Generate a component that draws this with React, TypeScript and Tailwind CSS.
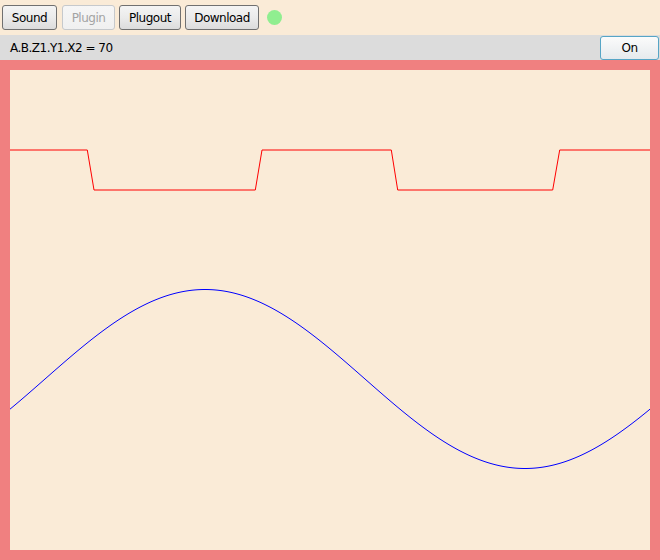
import React from "react";

const font = { fontFamily: '"DejaVu Sans", Verdana, sans-serif' };

function Btn({ label, w, disabled }: { label: string; w: string; disabled?: boolean }) {
  return (
    <button
      className={
        disabled
          ? `${w} h-[25px] rounded-[3px] border border-[#c6c9cc] bg-gradient-to-b from-[#f6f6f6] to-[#f0f0f0] text-[12px] tracking-[-0.5px] text-[#a3a3a3] flex items-center justify-center pt-[1px]`
          : `${w} h-[25px] rounded-[3px] border border-[#707070] bg-gradient-to-b from-[#f4f4f4] via-[#ebebeb] to-[#dcdcdc] text-[12px] tracking-[-0.5px] text-black flex items-center justify-center pt-[1px]`
      }
    >
      {label}
    </button>
  );
}

export default function App() {
  const pts: string[] = [];
  for (let x = 0; x <= 640; x += 2) {
    const y = 309 - 89.5 * Math.sin((2 * Math.PI * (x - 35)) / 640);
    pts.push(`${x},${y.toFixed(2)}`);
  }
  const sq =
    "M0,80 L77.3,80 L84,120 L245.3,120 L252,80 L381.3,80 L387.7,120 L542.7,120 L549.7,80 L640,80";
  return (
    <div className="w-[660px] h-[560px] bg-[#faebd7] flex flex-col" style={font}>
      <div className="h-[35px] flex items-start pt-[5px] pl-[2px]">
        <Btn label="Sound" w="w-[55px]" />
        <div className="w-[5px]" />
        <Btn label="Plugin" w="w-[53px]" disabled />
        <div className="w-[4px]" />
        <Btn label="Plugout" w="w-[62px]" />
        <div className="w-[4px]" />
        <Btn label="Download" w="w-[74px]" />
        <div className="ml-[8px] mt-[5px] w-[15px] h-[15px] rounded-full bg-[#90ee90]" />
      </div>
      <div className="h-[25px] bg-[#dcdcdc] flex items-center justify-between pl-[10px]">
        <span className="text-[12px] tracking-[-0.5px] text-black">A.B.Z1.Y1.X2 = 70</span>
        <button className="w-[59px] h-[24px] mr-[1px] rounded-[3px] border border-[#56a5c6] bg-gradient-to-b from-[#fbfbfb] to-[#e6eaed] text-[12px] tracking-[-0.5px] text-black flex items-center justify-center">
          On
        </button>
      </div>
      <div className="flex-1 bg-[#f08080] p-[10px]">
        <div className="w-[640px] h-[480px] bg-[#faebd7]">
          <svg width="640" height="480" viewBox="0 0 640 480">
            <path d={sq} fill="none" stroke="red" strokeWidth="1" />
            <polyline points={pts.join(" ")} fill="none" stroke="blue" strokeWidth="1" />
          </svg>
        </div>
      </div>
    </div>
  );
}
